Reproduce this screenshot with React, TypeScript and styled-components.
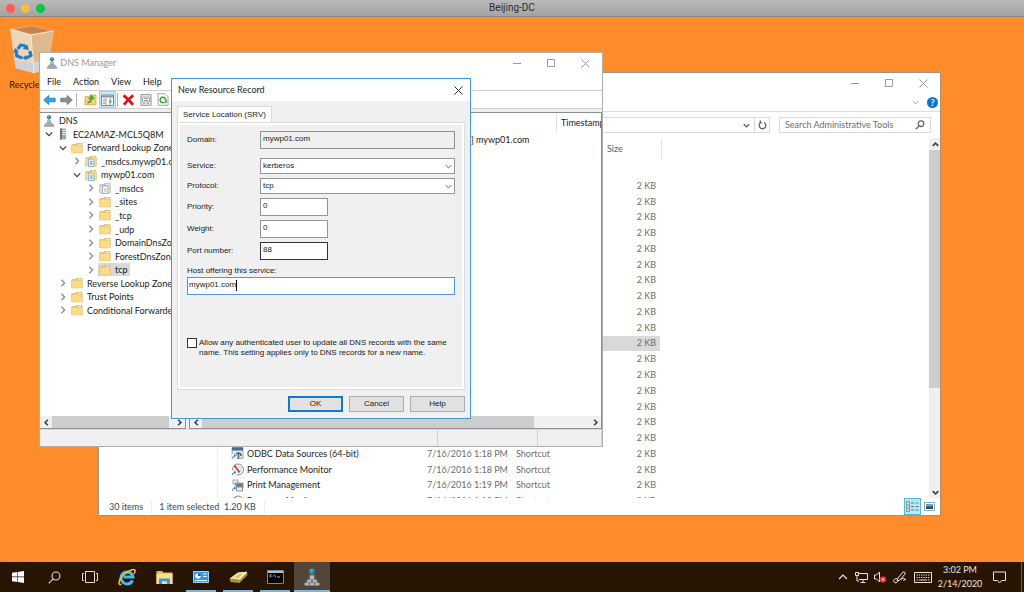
import React from "react";
import styled, { createGlobalStyle, css } from "styled-components";

const uiFont = `Lato, "Open Sans", sans-serif`;
const dialogFont = `"Liberation Sans", Arial, sans-serif`;

const GlobalStyle = createGlobalStyle`
  *, *::before, *::after { box-sizing: border-box; }
  body { margin: 0; font: 9px/14px ${uiFont}; color: #1a1a1a; overflow: hidden; }
  button, input, select { font: inherit; color: inherit; margin: 0; padding: 0; border: 0; background: none; border-radius: 0; outline: none; }
  ul { list-style: none; margin: 0; padding: 0; }
  svg { display: block; flex: none; }
`;

/* ---------- Screen and desktop ---------- */

const Screen = styled.div`
  display: flex;
  flex-direction: column;
  height: 100vh;
`;

const MacBar = styled.header`
  display: grid;
  grid-template-columns: 1fr auto 1fr;
  align-items: center;
  height: 17px;
  padding: 0 6px;
  background: linear-gradient(#b9b9b9, #a3a3a3);
  border-bottom: 1px solid #8d8580;
`;

const Lights = styled.div`
  display: flex;
  gap: 6px;
`;

const Light = styled.button<{ $color: string }>`
  width: 9px;
  height: 9px;
  border-radius: 50%;
  background: ${(p) => p.$color};
`;

const MacTitle = styled.h1`
  margin: 0;
  font: 400 10px/14px Roboto, sans-serif;
  color: #2c2c2c;
`;

const Desktop = styled.main`
  position: relative;
  flex: 1;
  min-height: 0;
  overflow: hidden;
  background: #ff8c2b;
`;

const DesktopItem = styled.div`
  position: absolute;
  left: 4px;
  top: 7px;
  width: 56px;
  display: flex;
  flex-direction: column;
  align-items: center;
  gap: 4px;
  white-space: nowrap;
`;

/* ---------- Window parts ---------- */

const Frame = styled.section<{ $x: number; $y: number; $w: number; $h: number; $edge: string }>`
  position: absolute;
  left: ${(p) => p.$x}px;
  top: ${(p) => p.$y}px;
  width: ${(p) => p.$w}px;
  height: ${(p) => p.$h}px;
  display: flex;
  flex-direction: column;
  background: #fff;
  border: 1px solid ${(p) => p.$edge};
  overflow: hidden;
`;

const TitleBar = styled.div<{ $h: number }>`
  flex: none;
  display: flex;
  align-items: center;
  height: ${(p) => p.$h}px;
  padding-left: 6px;
`;

const TitleText = styled.h2<{ $muted?: boolean }>`
  flex: 1;
  margin: 0;
  font: inherit;
  color: ${(p) => (p.$muted ? "#999" : "#222")};
`;

const WindowButton = styled.button`
  width: 34px;
  height: 100%;
  display: grid;
  place-items: center;
  color: #999;
`;

const Chevron = ({ dir = "down", size = 7, color = "#606060", width = 1.3 }: { dir?: "up" | "down" | "left" | "right"; size?: number; color?: string; width?: number }) => {
  const d = { down: "M1 3 5 7 9 3", up: "M1 7 5 3 9 7", left: "M7 1 3 5 7 9", right: "M3 1 7 5 3 9" }[dir];
  return (
    <svg width={size} height={size} viewBox="0 0 10 10" fill="none" stroke={color} strokeWidth={(width * 10) / size}>
      <path d={d} />
    </svg>
  );
};

const WindowControls = () => (
  <>
    <WindowButton aria-label="Minimize">
      <svg width="9" height="9" stroke="currentColor"><path d="M0 4.500H8" /></svg>
    </WindowButton>
    <WindowButton aria-label="Maximize">
      <svg width="9" height="9" stroke="currentColor" fill="none"><path d="M.5.5h7v7h-7z" /></svg>
    </WindowButton>
    <WindowButton aria-label="Close">
      <svg width="9" height="9" stroke="currentColor"><path d="M.5.5l8 8M8.500.5l-8 8" /></svg>
    </WindowButton>
  </>
);

/* ---------- Scroll bars ---------- */

const ScrollTrack = styled.div<{ $vertical?: boolean }>`
  flex: none;
  display: flex;
  flex-direction: ${(p) => (p.$vertical ? "column" : "row")};
  ${(p) => (p.$vertical ? "width: 11px;" : "height: 12px;")}
  background: #f0f0f0;
`;

const ScrollArrow = styled.button`
  flex: none;
  width: 12px;
  height: 12px;
  display: grid;
  place-items: center;
`;

const Thumb = styled.div<{ $size: number }>`
  flex: 0 1 ${(p) => p.$size}px;
  background: #cdcdcd;
`;

const Spacer = styled.div`
  flex: 1;
`;

const ScrollBar = ({ vertical, thumb }: { vertical?: boolean; thumb: number }) => (
  <ScrollTrack $vertical={vertical}>
    <ScrollArrow aria-label="Scroll back">
      <Chevron dir={vertical ? "up" : "left"} color="#404040" width={1.600} />
    </ScrollArrow>
    <Thumb $size={thumb} />
    <Spacer />
    <ScrollArrow aria-label="Scroll forward">
      <Chevron dir={vertical ? "down" : "right"} color="#404040" width={1.600} />
    </ScrollArrow>
  </ScrollTrack>
);

/* ---------- Icons ---------- */

const DnsIcon = ({ size = 12 }: { size?: number }) => (
  <svg width={size} height={size} viewBox="0 0 16 16">
    <circle cx="8" cy="3" r="2.800" fill="#2478b8" />
    <path d="M6 1.500 8.500.8 9 3 7 4.500z" fill="#4fc06a" />
    <path d="M8 5.500v4M4 12l4-3 4 3" stroke="#7a858c" fill="none" />
    <path d="M6 6.500h4v4H6zM3.500 10.500h4v2.500h-4zM8.500 10.500h4v2.500h-4zM1.500 13h4v2.600h-4zM6 13h4v2.600H6zM10.500 13h4v2.600h-4z" fill="#b4bbc0" stroke="#7b8388" strokeWidth=".5" />
  </svg>
);

const FolderIcon = ({ muted, sheet }: { muted?: boolean; sheet?: boolean }) => (
  <svg width="12" height="12" viewBox="0 0 12 12">
    <path d="M.7 2.200h4l1-1.200h5.600v10H.7z" fill={muted ? "#bdbdbd" : "#dfb65c"} />
    <path d="M6.500 1.800h4v1h-4z" fill="#fff" />
    <path d="M.7 3.200h10.600v7.800H.7z" fill={muted ? "#dedede" : "#fbdc8c"} stroke={muted ? "#b5b5b5" : "#e6c069"} strokeWidth=".6" />
    {sheet && (
      <>
        <path d="M3.500 4h4L9 5.500v6H3.500z" fill={muted ? "#fafafa" : "#e4f2fc"} stroke={muted ? "#999" : "#7ba9c8"} strokeWidth=".8" />
        <path d="M5 7h2.500M5 9h2.500" stroke={muted ? "#aaa" : "#3b8dc8"} />
      </>
    )}
  </svg>
);

const ServerIcon = () => (
  <svg width="12" height="12" viewBox="0 0 12 12">
    <path d="M3 .5h6v11H3z" fill="#a3abaf" />
    <path d="M3 .5h2v11H3z" fill="#6c777d" />
    <path d="M5.500 2.500h3M5.500 4.500h3M5.500 6.500h3" stroke="#e8ecee" />
    <path d="M7 9h1.500v1H7z" fill="#49b35a" />
  </svg>
);

const ArrowIcon = ({ flip, fill, stroke }: { flip?: boolean; fill: string; stroke: string }) => (
  <svg width="13" height="12" viewBox="0 0 13 12">
    <path d={flip ? "M12.300 6 7.200 1.500v2.700H.8v3.600h6.400v2.700z" : "M.7 6 5.800 1.500v2.700h6.400v3.600H5.800v2.700z"} fill={fill} stroke={stroke} strokeWidth=".8" />
  </svg>
);

const FolderUpIcon = () => (
  <svg width="13" height="13" viewBox="0 0 13 13">
    <path d="M1 3.500h4l1-1.500h6v10H1z" fill="#f3d27c" stroke="#d2a94b" strokeWidth=".7" />
    <path d="M3.500 9.500c3 0 4-2 4-4.500M5 6.200 7.600 3l2.200 3.300" fill="none" stroke="#3fa535" strokeWidth="1.700" />
  </svg>
);

const PanesIcon = () => (
  <svg width="13" height="12" viewBox="0 0 13 12">
    <path d="M.5 1h12v10.500H.5z" fill="#fff" stroke="#7c8790" />
    <path d="M1 1.500h11v2H1z" fill="#8d99a3" />
    <path d="M5 4v7.500M9 4v7.500M2 5.500h2M2 7.500h2M2 9.500h2" stroke="#8d99a3" />
    <path d="M10.300 5.500v4L7.800 7.500z" fill="#43aa3c" />
  </svg>
);

const DeleteIcon = () => (
  <svg width="13" height="12" viewBox="0 0 13 12">
    <path d="M1.500 1.500c3 2 6 5 9.500 9.300M11.300 1.300C7.500 4 4.500 7 2 10.800" fill="none" stroke="#d9151c" strokeWidth="2.800" />
  </svg>
);

const SheetIcon = () => (
  <svg width="12" height="12" viewBox="0 0 12 12">
    <path d="M1 .7h10v10.600H1z" fill="#f4f4f4" stroke="#8f8f8f" />
    <path d="M2.500 3h7v5h-7z" fill="none" stroke="#ababab" />
    <path d="M4 4.500h4M4 6.500h4M3 9.500h2M7 9.500h2" stroke="#9b9b9b" />
  </svg>
);

const ReloadPageIcon = () => (
  <svg width="12" height="13" viewBox="0 0 12 13">
    <path d="M1 .7h7l3 3v8.600H1z" fill="#fafdf9" stroke="#a0a8a0" />
    <path d="M8.500 7.500A2.700 2.700 0 1 0 7 9.400" fill="none" stroke="#2fa23b" strokeWidth="1.500" />
    <path d="M9.800 6.500v3.300H6.700z" fill="#2fa23b" />
  </svg>
);

const RecycleBinIcon = () => (
  <svg width="50" height="50" viewBox="0 0 46 50" preserveAspectRatio="none">
    <path d="M3 5 23 1l20 6-5 38-13 4-17-5z" fill="#e9c7a2" />
    <path d="M3 5l20-4 20 6-21 4z" fill="#dc9a5e" />
    <path d="M7 6l16-3.500L39 7l-17 2.500z" fill="#c88448" />
    <path d="M3 5l19 6 3 38-17-5z" fill="#efd5b8" />
    <path d="M22 11 43 7l-5 38-13 4z" fill="#dfb88f" />
    <path d="M7 36l16 3 16-5-2 11-12 4-17-5z" fill="#cfd2d6" />
    <path d="M3 5l19 6 21-4M22 11l3 38" fill="none" stroke="#f8e6d2" />
    <g fill="none" stroke="#1a7fd4" strokeWidth="3">
      <path d="M10 25l2.500-4 3.500.5 1 2" />
      <path d="M21 27l1 4.500-4 2.500" />
      <path d="M14 34l-5-2-.5-4" />
    </g>
    <path d="M14.500 25l5.500 1-1-5.500zM18 31v5.500l-4-2.500zM5.500 28.500l5.500-1-3.500-3.500z" fill="#1a7fd4" />
  </svg>
);

const OdbcIcon = () => (
  <svg width="13" height="13" viewBox="0 0 13 13">
    <path d="M1 .5h11v11H1z" fill="#dfe4e8" stroke="#8694a0" strokeWidth=".7" />
    <path d="M1 .5h11v3H1z" fill="#41699c" />
    <path d="M5 9c0-4 5-4 5 0M7.500 6v6" stroke="#59646c" strokeWidth="1.500" fill="none" />
    <path d="M.5 7h5v5.500h-5z" fill="#fff" />
    <path d="M1.500 11.500c0-2 1-2.800 3-2.800M3.200 7.300l1.600 1.500-1.600 1.500" fill="none" stroke="#2477c4" />
  </svg>
);

const GaugeIcon = () => (
  <svg width="13" height="13" viewBox="0 0 13 13">
    <circle cx="7" cy="6.500" r="5.500" fill="#f5f5f5" stroke="#8b8b8b" />
    <path d="M3.500 2.500l5 7" stroke="#d22f27" strokeWidth="1.700" />
    <path d="M8 3.500l2 2M9.500 7l1 1" stroke="#999" />
    <path d="M.5 7.500h5v5h-5z" fill="#fff" />
    <path d="M1.500 12c0-2 1-2.800 3-2.800M3.200 7.800l1.600 1.500-1.600 1.500" fill="none" stroke="#2477c4" />
  </svg>
);

const PrinterIcon = () => (
  <svg width="13" height="13" viewBox="0 0 13 13">
    <path d="M2 1h5v4H2z" fill="#f2f2f2" stroke="#8f8f8f" strokeWidth=".8" />
    <path d="M4 3.500h8.500v6H4z" fill="#8f979d" />
    <path d="M5.500 8h6v4h-6z" fill="#ecedef" stroke="#707880" strokeWidth=".8" />
    <path d="M5.500 6h6" stroke="#4e565c" />
    <path d="M.5 7h4.500v5.500H.5z" fill="#fff" />
    <path d="M1.300 11.800c0-2 1-2.800 3-2.800M3 7.500 4.600 9 3 10.500" fill="none" stroke="#2477c4" />
  </svg>
);

/* ---------- File explorer ---------- */

const RibbonRow = styled.div`
  flex: none;
  display: flex;
  justify-content: flex-end;
  align-items: center;
  gap: 8px;
  height: 19px;
  padding-right: 2px;
  border-bottom: 1px solid #dcdde0;
`;

const HelpButton = styled.button`
  width: 11px;
  height: 11px;
  border-radius: 50%;
  background: #0c74cc;
  color: #fff;
  font-weight: 700;
  line-height: 11px;
`;

const AddressRow = styled.div`
  flex: none;
  display: flex;
  gap: 9px;
  height: 26px;
  padding: 5px 9px 5px 6px;
`;

const AddressBox = styled.div`
  flex: 1;
  display: flex;
  justify-content: flex-end;
  border: 1px solid #d9d9d9;
`;

const AddressButton = styled.button<{ $divided?: boolean }>`
  width: 15px;
  display: grid;
  place-items: center;
  ${(p) => p.$divided && css`border-left: 1px solid #d9d9d9;`}
`;

const SearchBox = styled.label`
  width: 152px;
  display: flex;
  align-items: center;
  padding: 0 5px;
  border: 1px solid #d9d9d9;
  input { flex: 1; min-width: 0; height: 14px; }
  input::placeholder { color: #6d6d6d; opacity: 1; }
`;

const ExplorerBody = styled.div`
  flex: 1;
  min-height: 0;
  display: flex;
`;

const NavPane = styled.nav`
  flex: none;
  width: 119px;
  border-right: 1px solid #f0f0f0;
`;

const ListArea = styled.div`
  flex: 1;
  overflow: hidden;
`;

const FileTable = styled.table`
  display: block;
  width: 442px;
  color: #6d6d6d;
  tr {
    display: grid;
    grid-template-columns: 205px 89px 90px 58px;
    align-items: center;
  }
  thead tr { height: 20px; margin-bottom: 16px; }
  th { font-weight: 400; text-align: left; color: #4c607a; padding: 2px 3px; height: 20px; }
  th:last-child { border-right: 1px solid #e5e5e5; }
  td { padding: 0 4px; white-space: nowrap; }
  td:last-child { text-align: right; }
  tbody {
    display: grid;
    grid-auto-rows: 1fr;
    height: 331px;
  }
`;

const FileRow = styled.tr<{ $selected?: boolean }>`
  margin-right: 2px;
  ${(p) => p.$selected && css`background: #d9d9d9;`}
`;

const FileName = styled.span`
  display: flex;
  align-items: center;
  gap: 3px;
  padding-left: 9px;
  color: #1e1e1e;
`;

const ExplorerStatus = styled.footer`
  flex: none;
  display: flex;
  align-items: center;
  height: 17px;
  padding: 0 2px 0 10px;
  color: #33485f;
`;

const StatusCell = styled.span`
  padding-right: 8px;
  margin-right: 7px;
  border-right: 1px solid #eee;
  white-space: pre;
`;

const ViewButton = styled.button<{ $on?: boolean }>`
  width: 17px;
  height: 17px;
  display: grid;
  place-items: center;
  ${(p) => p.$on && css`background: #bfe6f5; border: 1px solid #4fbce0;`}
`;

type FileItem = { name?: string; icon?: React.ReactNode; date?: string; size: string; selected?: boolean };

const files: FileItem[] = [
  ...Array.from({ length: 17 }, (_, i) => ({ size: "2 KB", selected: i === 10 })),
  { name: "ODBC Data Sources (64-bit)", icon: <OdbcIcon />, date: "7/16/2016 1:18 PM", size: "2 KB" },
  { name: "Performance Monitor", icon: <GaugeIcon />, date: "7/16/2016 1:18 PM", size: "2 KB" },
  { name: "Print Management", icon: <PrinterIcon />, date: "7/16/2016 1:19 PM", size: "2 KB" },
  { name: "Resource Monitor", icon: <GaugeIcon />, date: "7/16/2016 1:18 PM", size: "2 KB" },
];

const Explorer = () => (
  <Frame $x={98} $y={55} $w={843} $h={444} $edge="#a8907c" aria-label="Administrative Tools">
    <TitleBar $h={20}>
      <Spacer />
      <WindowControls />
    </TitleBar>
    <RibbonRow>
      <Chevron color="#999" width={1} />
      <HelpButton>?</HelpButton>
    </RibbonRow>
    <AddressRow>
      <AddressBox>
        <AddressButton aria-label="Previous locations"><Chevron color="#555" /></AddressButton>
        <AddressButton $divided aria-label="Refresh">
          <svg width="9" height="10" viewBox="0 0 9 10" fill="none" stroke="#666" strokeWidth="1.300">
            <path d="M6 2.500A3.300 3.300 0 1 1 2 3.300M2.300.5v3M1 3.300l2.800-.8" />
          </svg>
        </AddressButton>
      </AddressBox>
      <SearchBox>
        <input type="search" placeholder="Search Administrative Tools" aria-label="Search Administrative Tools" />
        <svg width="10" height="10" viewBox="0 0 10 10" fill="none" stroke="#666" strokeWidth="1.300">
          <circle cx="6" cy="3.700" r="2.800" />
          <path d="M4 6 .8 9.200" />
        </svg>
      </SearchBox>
    </AddressRow>
    <ExplorerBody>
      <NavPane />
      <ListArea>
        <FileTable>
          <thead>
            <tr><th /><th /><th /><th>Size</th></tr>
          </thead>
          <tbody>
            {files.map((f, i) => (
              <FileRow key={i} $selected={f.selected}>
                <td>{f.name && <FileName>{f.icon}{f.name}</FileName>}</td>
                <td>{f.date}</td>
                <td>{f.name && "Shortcut"}</td>
                <td>{f.size}</td>
              </FileRow>
            ))}
          </tbody>
        </FileTable>
      </ListArea>
      <ScrollBar vertical thumb={238} />
    </ExplorerBody>
    <ExplorerStatus>
      <StatusCell>30 items</StatusCell>
      <StatusCell>{"1 item selected  1.20 KB"}</StatusCell>
      <Spacer />
      <ViewButton $on aria-label="Details view">
        <svg width="13" height="11" viewBox="0 0 13 11" fill="none">
          <path d="M.5.5h3v10h-3zM.5 4h3M.5 7h3" stroke="#a08c8c" />
          <path d="M5 2h3M9.500 2h3M5 5.500h3M9.500 5.500h3M5 9h3M9.500 9h3" stroke="#60798a" />
        </svg>
      </ViewButton>
      <ViewButton aria-label="Large icons view">
        <svg width="11" height="9" viewBox="0 0 11 9">
          <path d="M.5.5h10v8H.5z" fill="#fff" stroke="#9aa8b4" />
          <path d="M2 2h7v5H2z" fill="#5aa2dc" />
          <path d="M2 5c3-2 4 1 7-1v3H2z" fill="#234c6b" />
        </svg>
      </ViewButton>
    </ExplorerStatus>
  </Frame>
);

/* ---------- DNS Manager ---------- */

const MenuBar = styled.nav`
  flex: none;
  display: flex;
  gap: 12px;
  height: 18px;
  padding: 1px 7px 0;
  border-bottom: 1px solid #cfcfcf;
`;

const MenuItem = styled.button`
  line-height: 16px;
`;

const ToolBar = styled.div`
  flex: none;
  display: flex;
  align-items: center;
  height: 18px;
  padding-left: 1px;
  border-bottom: 1px solid #d0d0d0;
`;

const ToolButton = styled.button<{ $on?: boolean }>`
  width: 17px;
  height: 17px;
  display: grid;
  place-items: center;
  ${(p) => p.$on && css`background: #cce8ff; border: 1px solid #99d1ff;`}
`;

const ToolSeparator = styled.span`
  width: 1px;
  height: 14px;
  margin: 0 2px 0 1px;
  background: #b5b5b5;
`;

const Panes = styled.div`
  flex: 1;
  min-height: 0;
  display: flex;
  gap: 3px;
  padding-top: 3px;
  background: #f0f0f0;
`;

const Pane = styled.div<{ $w?: number }>`
  ${(p) => (p.$w ? `flex: none; width: ${p.$w}px;` : "flex: 1; min-width: 0;")}
  display: flex;
  flex-direction: column;
  border: 1px solid #8a8d93;
  border-left-width: ${(p) => (p.$w ? 0 : 1)}px;
  background: #fff;
  overflow: hidden;
`;

const Tree = styled.ul`
  display: grid;
  grid-auto-rows: 1fr;
  height: 204px;
  padding-top: 1px;
`;

const TreeRow = styled.li<{ $depth: number }>`
  display: flex;
  align-items: center;
  padding-left: ${(p) => 2 + p.$depth * 14}px;
  white-space: nowrap;
`;

const TreeToggle = styled.button`
  flex: none;
  width: 14px;
  display: grid;
  place-items: center;
`;

const TreeLabel = styled.span<{ $selected?: boolean }>`
  display: flex;
  align-items: center;
  gap: 4px;
  padding: 0 2px 0 1px;
  line-height: 13px;
  ${(p) => p.$selected && css`background: #d9d9d9;`}
`;

type Node = { label: string; depth: number; open?: boolean; icon?: React.ReactNode; root?: boolean; selected?: boolean };

const nodes: Node[] = [
  { label: "DNS", depth: 0, icon: <DnsIcon />, root: true },
  { label: "EC2AMAZ-MCL5Q8M", depth: 0, open: true, icon: <ServerIcon /> },
  { label: "Forward Lookup Zones", depth: 1, open: true },
  { label: "_msdcs.mywp01.com", depth: 2, icon: <FolderIcon sheet /> },
  { label: "mywp01.com", depth: 2, open: true, icon: <FolderIcon sheet /> },
  { label: "_msdcs", depth: 3, icon: <FolderIcon sheet muted /> },
  { label: "_sites", depth: 3 },
  { label: "_tcp", depth: 3 },
  { label: "_udp", depth: 3 },
  { label: "DomainDnsZones", depth: 3 },
  { label: "ForestDnsZones", depth: 3 },
  { label: "tcp", depth: 3, selected: true },
  { label: "Reverse Lookup Zones", depth: 1 },
  { label: "Trust Points", depth: 1 },
  { label: "Conditional Forwarders", depth: 1 },
];

const RecordTable = styled.table`
  flex: 1;
  display: block;
  border-spacing: 0;
  tr { display: grid; grid-template-columns: 281px 1fr; }
  th { width: auto; height: 18px; padding: 2px 4px 0; font-weight: 400; text-align: left; white-space: nowrap; }
  th + th { border-left: 1px solid #e0e0e0; }
  thead tr { grid-template-columns: 366px 1fr; padding-top: 1px; }
  td { padding: 1px 0 0; white-space: nowrap; line-height: 14px; }
`;

const DnsStatus = styled.footer`
  flex: none;
  display: grid;
  grid-template-columns: 1fr 100px 64px;
  height: 17px;
  background: #f0f0f0;
  border-top: 1px solid #dcdcdc;
  span { border-right: 1px solid #d2d2d2; }
`;

const Gap = styled.span`
  width: 3px;
`;

const DnsManager = () => (
  <Frame $x={39} $y={35} $w={564} $h={395} $edge="#b3aca6" aria-label="DNS Manager">
    <TitleBar $h={20}>
      <DnsIcon />
      <TitleText $muted>&nbsp;DNS Manager</TitleText>
      <WindowControls />
    </TitleBar>
    <MenuBar>
      {["File", "Action", "View", "Help"].map((m) => <MenuItem key={m}>{m}</MenuItem>)}
    </MenuBar>
    <ToolBar>
      <ToolButton aria-label="Back"><ArrowIcon fill="#2fa4e7" stroke="#1a7fbe" /></ToolButton>
      <ToolButton aria-label="Forward"><ArrowIcon flip fill="#8f8f8f" stroke="#707070" /></ToolButton>
      <ToolSeparator />
      <Gap />
      <ToolButton aria-label="Up one level"><FolderUpIcon /></ToolButton>
      <ToolButton $on aria-label="Show console tree"><PanesIcon /></ToolButton>
      <ToolSeparator />
      <ToolButton aria-label="Delete"><DeleteIcon /></ToolButton>
      <ToolButton aria-label="Properties"><SheetIcon /></ToolButton>
      <ToolButton aria-label="Refresh"><ReloadPageIcon /></ToolButton>
    </ToolBar>
    <Panes>
      <Pane $w={146}>
        <Tree>
          {nodes.map((n, i) => (
            <TreeRow key={i} $depth={n.depth}>
              {!n.root && (
                <TreeToggle aria-label={n.open ? "Collapse" : "Expand"}>
                  <Chevron dir={n.open ? "down" : "right"} color={n.open ? "#404040" : "#8c8c8c"} size={8} />
                </TreeToggle>
              )}
              <TreeLabel $selected={n.selected}>
                {n.icon ?? <FolderIcon />}
                {n.label}
              </TreeLabel>
            </TreeRow>
          ))}
        </Tree>
        <Spacer />
        <ScrollBar thumb={117} />
      </Pane>
      <Pane>
        <RecordTable>
          <thead><tr><th /><th>Timestamp</th></tr></thead>
          <tbody><tr><td /><td>] mywp01.com</td></tr></tbody>
        </RecordTable>
        <ScrollBar thumb={332} />
      </Pane>
    </Panes>
    <DnsStatus><span /><span /><span /></DnsStatus>
  </Frame>
);

/* ---------- New Resource Record dialog ---------- */

const DialogBody = styled.form`
  flex: 1;
  display: flex;
  flex-direction: column;
  padding: 5px 5px 6px;
  background: #f0f0f0;
  font: 8px/10px ${dialogFont};
`;

const TabButton = styled.button`
  align-self: flex-start;
  height: 16px;
  padding: 0 5px;
  background: #fff;
  border: 1px solid #dcdcdc;
  border-bottom: 0;
`;

const TabPanel = styled.div`
  flex: 1;
  width: 288px;
  padding: 4px 7px;
  border: 1px solid #dcdcdc;
  outline: 2px solid #fff;
  outline-offset: -3px;
`;

const Field = styled.div<{ $apart?: boolean }>`
  display: grid;
  grid-template-columns: 73px 195px;
  align-items: center;
  margin: ${(p) => (p.$apart ? 9 : 4)}px 2px 0;
  input, select { height: 18px; border: 1px solid #949494; padding: 0 2px 3px; background: #fff; }
  input:read-only { background: #f0f0f0; }
  select { grid-area: 1 / 2; height: 16px; appearance: none; padding: 0 2px; }
  svg { grid-area: 1 / 2; justify-self: end; margin-right: 3px; pointer-events: none; }
`;

const NumberInput = styled.input<{ $dark?: boolean }>`
  && { width: 68px; ${(p) => p.$dark && "border-color: #333;"} }
`;

const HostLabel = styled.label`
  display: block;
  margin: 6px 2px 1px;
`;

const HostBox = styled.div`
  display: flex;
  align-items: flex-start;
  height: 18px;
  margin: 0 2px;
  padding: 2px 1px;
  background: #fff;
  border: 1px solid #4a9bdc;
  input { field-sizing: content; height: 10px; }
`;

const Caret = styled.span`
  width: 1px;
  height: 11px;
  background: #000;
`;

const CheckRow = styled.label`
  display: flex;
  gap: 2px;
  margin: 43px 2px 0;
  input { flex: none; appearance: none; width: 10px; height: 10px; border: 1px solid #333; background: #fff; }
`;

const DialogActions = styled.div`
  display: flex;
  justify-content: flex-end;
  gap: 6px;
  margin-top: 6px;
`;

const DialogButton = styled.button<{ $primary?: boolean }>`
  width: 55px;
  height: 16px;
  background: #e1e1e1;
  border: ${(p) => (p.$primary ? "2px solid #0c7bd6" : "1px solid #adadad")};
`;

const DialogClose = styled.button`
  width: 24px;
  height: 20px;
  display: grid;
  place-items: center;
`;

const ResourceDialog = () => (
  <Frame as="div" role="dialog" aria-label="New Resource Record" $x={171} $y={61} $w={300} $h={341} $edge="#3d9bdc">
    <TitleBar $h={22}>
      <TitleText>New Resource Record</TitleText>
      <DialogClose aria-label="Close">
        <svg width="9" height="9" stroke="#333"><path d="M.5.5l8 8M8.500.5l-8 8" /></svg>
      </DialogClose>
    </TitleBar>
    <DialogBody onSubmit={(e) => e.preventDefault()}>
      <TabButton type="button">Service Location (SRV)</TabButton>
      <TabPanel>
        <Field>
          <label htmlFor="domain">Domain:</label>
          <input id="domain" readOnly value="mywp01.com" />
        </Field>
        <Field $apart>
          <label htmlFor="service">Service:</label>
          <select id="service"><option>kerberos</option></select>
          <Chevron width={1} />
        </Field>
        <Field>
          <label htmlFor="protocol">Protocol:</label>
          <select id="protocol"><option>tcp</option></select>
          <Chevron width={1} />
        </Field>
        <Field>
          <label htmlFor="priority">Priority:</label>
          <NumberInput id="priority" defaultValue="0" />
        </Field>
        <Field>
          <label htmlFor="weight">Weight:</label>
          <NumberInput id="weight" defaultValue="0" />
        </Field>
        <Field>
          <label htmlFor="port">Port number:</label>
          <NumberInput id="port" $dark defaultValue="88" />
        </Field>
        <HostLabel htmlFor="host">Host offering this service:</HostLabel>
        <HostBox>
          <input id="host" defaultValue="mywp01.com" />
          <Caret />
        </HostBox>
        <CheckRow>
          <input type="checkbox" />
          <span>
            Allow any authenticated user to update all DNS records with the same
            <br />
            name. This setting applies only to DNS records for a new name.
          </span>
        </CheckRow>
      </TabPanel>
      <DialogActions>
        <DialogButton $primary>OK</DialogButton>
        <DialogButton type="button">Cancel</DialogButton>
        <DialogButton type="button">Help</DialogButton>
      </DialogActions>
    </DialogBody>
  </Frame>
);

/* ---------- Taskbar ---------- */

const TaskBar = styled.footer`
  flex: none;
  display: flex;
  height: 30px;
  background: #271403;
  color: #e8e4e0;
`;

const SystemGroup = styled.div`
  display: flex;
  margin-right: 1px;
`;

const AppGroup = styled.div`
  display: flex;
  gap: 1px;
`;

const TaskButton = styled.button<{ $running?: boolean; $active?: boolean }>`
  width: 36px;
  display: grid;
  place-items: center;
  background: ${(p) => (p.$active ? "#524539" : "none")};
  ${(p) => p.$active && css`box-shadow: inset 0 -2px #79b7e0;`}
  ${(p) => p.$running && css`
    background: linear-gradient(#79b7e0, #79b7e0) center bottom / 30px 2px no-repeat;
  `}
`;

const Tray = styled.div`
  margin-left: auto;
  display: flex;
  align-items: center;
`;

const TrayButton = styled.button<{ $w: number }>`
  width: ${(p) => p.$w}px;
  height: 30px;
  display: grid;
  place-items: center;
`;

const Clock = styled.time`
  width: 50px;
  text-align: center;
  line-height: 14px;
`;

const TrayEnd = styled.span`
  width: 7px;
`;

const ShowDesktop = styled.button`
  width: 3px;
  height: 30px;
  border-left: 1px solid #6b5f54;
`;

const Taskbar = () => (
  <TaskBar>
    <SystemGroup>
      <TaskButton aria-label="Start">
        <svg width="12" height="12" viewBox="0 0 12 12" fill="#fff"><path d="M0 1.700 5.200 1v4.600H0zM5.800.9 12 0v5.600H5.800zM0 6.300h5.200V11L0 10.300zM5.800 6.300H12V12l-6.200-.9z" /></svg>
      </TaskButton>
      <TaskButton aria-label="Search">
        <svg width="13" height="13" viewBox="0 0 13 13" fill="none" stroke="#e0dcd8" strokeWidth="1.100"><circle cx="8" cy="5" r="4" /><path d="M5.200 7.800.7 12.300" /></svg>
      </TaskButton>
      <TaskButton aria-label="Task view">
        <svg width="16" height="12" viewBox="0 0 16 12" fill="none" stroke="#e0dcd8"><path d="M3.500.5h9v11h-9zM2 2.500H.5v7H2M14 2.500h1.500v7H14" /></svg>
      </TaskButton>
    </SystemGroup>
    <AppGroup>
      <TaskButton aria-label="Internet Explorer">
        <svg width="18" height="18" viewBox="0 0 18 18" fill="none">
          <path d="M14.500 12.500A6 6 0 1 1 15 9H5.500" stroke="#45b9ee" strokeWidth="3" />
          <path d="M3.500 16.500C-.5 17.500.5 12 5 7.500S15.500.5 16.800 2c.8 1-.3 3-.8 3.800" stroke="#f5c22e" strokeWidth="1.500" />
        </svg>
      </TaskButton>
      <TaskButton aria-label="File Explorer">
        <svg width="17" height="15" viewBox="0 0 17 15">
          <path d="M.5 1h5.800l1 1.500h9.200V14H.5z" fill="#e8b64a" />
          <path d="M.5 3.500h16V14H.5z" fill="#fbdf8f" />
          <path d="M3 14V8.500h11V14h-3v-2.700H6V14z" fill="#2a9fd8" />
        </svg>
      </TaskButton>
      <TaskButton $running aria-label="Server Manager">
        <svg width="16" height="12" viewBox="0 0 16 12">
          <path d="M.5.5h15v11H.5z" fill="#2b9ae0" stroke="#9bd4f5" />
          <circle cx="5" cy="5" r="2.800" fill="#e7f5fd" />
          <path d="M5 5V2.200A2.800 2.800 0 0 1 7.800 5z" fill="#1467a8" />
          <path d="M10 3h4M10 5.500h4M2 9.500h12" stroke="#e7f5fd" />
        </svg>
      </TaskButton>
      <TaskButton $running aria-label="Toolbox">
        <svg width="19" height="13" viewBox="0 0 19 13">
          <path d="M.5 8 9 1.500 18 .8 18.500 4 10.500 12 1.500 11z" fill="#a98f3c" />
          <path d="M.5 7.500 9 1.500 18 .8 10.500 8.500z" fill="#f5e8ae" />
          <path d="M5 6.500 10 3l4-.3-4.500 4z" fill="#d6c06c" />
          <path d="M10.500 8.500 18 1" stroke="#fff6cf" />
        </svg>
      </TaskButton>
      <TaskButton $running aria-label="Command Prompt">
        <svg width="17" height="14" viewBox="0 0 17 14">
          <path d="M.5.5h16v13H.5z" fill="#000" stroke="#84888b" />
          <path d="M1 1h15v2H1z" fill="#b9bec1" />
          <path d="M4.500 4.800H3v2h1.500M6 5.500v1M7.500 4.500l1 2.500M10 7h3" stroke="#ddd" fill="none" strokeWidth=".8" />
        </svg>
      </TaskButton>
      <TaskButton $active aria-label="DNS Manager"><DnsIcon size={18} /></TaskButton>
    </AppGroup>
    <Tray>
      <TrayButton $w={16} aria-label="Show hidden icons"><Chevron dir="up" size={10} color="#e8e4e0" width={1.100} /></TrayButton>
      <TrayButton $w={20} aria-label="Network">
        <svg width="13" height="11" viewBox="0 0 13 11" fill="none" stroke="#e8e4e0"><path d="M3 1.500h9.500v6H4M8 7.500v3M5.500 10.500h5M.5.5h3v3h-3zM2 3.500v5.500h2" /></svg>
      </TrayButton>
      <TrayButton $w={18} aria-label="Volume muted">
        <svg width="13" height="12" viewBox="0 0 13 12" fill="none"><path d="M.5 4h2l3-3v10l-3-3h-2z" stroke="#e8e4e0" /><circle cx="9" cy="8.500" r="3.300" fill="#e0242f" /><path d="M7.700 7.200l2.600 2.600M10.300 7.200 7.700 9.800" stroke="#fff" /></svg>
      </TrayButton>
      <TrayButton $w={22} aria-label="Pen workspace">
        <svg width="14" height="13" viewBox="0 0 14 13" fill="none" stroke="#e8e4e0"><path d="M4 10 5 7l5-6c1.500-.5 2.500.5 2 2L7 9zM4 7.500c-3 0-4 2-3 3.500s3 1 4-1M8 8.500c2-2 4-1.500 3.500 0S9 9.500 13 8.500" /></svg>
      </TrayButton>
      <TrayButton $w={24} aria-label="Touch keyboard">
        <svg width="18" height="11" viewBox="0 0 18 11" fill="none" stroke="#e8e4e0"><path d="M.5.5h17v10H.5z" /><path d="M2.500 3h13M2.500 5.500h13" strokeDasharray="1.300 1" /><path d="M2.500 8h1.500M5 8h8M14 8h1.500" /></svg>
      </TrayButton>
      <Clock>3:02 PM<br />2/14/2020</Clock>
      <TrayButton $w={29} aria-label="Notifications">
        <svg width="13" height="13" viewBox="0 0 13 13" fill="none" stroke="#e8e4e0"><path d="M.5 1h12v8.500h-4l-2 2.500-2-2.500h-4z" /></svg>
      </TrayButton>
      <TrayEnd />
      <ShowDesktop aria-label="Show desktop" />
    </Tray>
  </TaskBar>
);

export default function App() {
  return (
    <Screen>
      <GlobalStyle />
      <MacBar>
        <Lights>
          <Light $color="#ff5f57" aria-label="Close" />
          <Light $color="#fdbc40" aria-label="Minimize" />
          <Light $color="#07c64a" aria-label="Zoom" />
        </Lights>
        <MacTitle>Beijing-DC</MacTitle>
      </MacBar>
      <Desktop>
        <DesktopItem><RecycleBinIcon />Recycle Bin</DesktopItem>
        <Explorer />
        <DnsManager />
        <ResourceDialog />
      </Desktop>
      <Taskbar />
    </Screen>
  );
}
